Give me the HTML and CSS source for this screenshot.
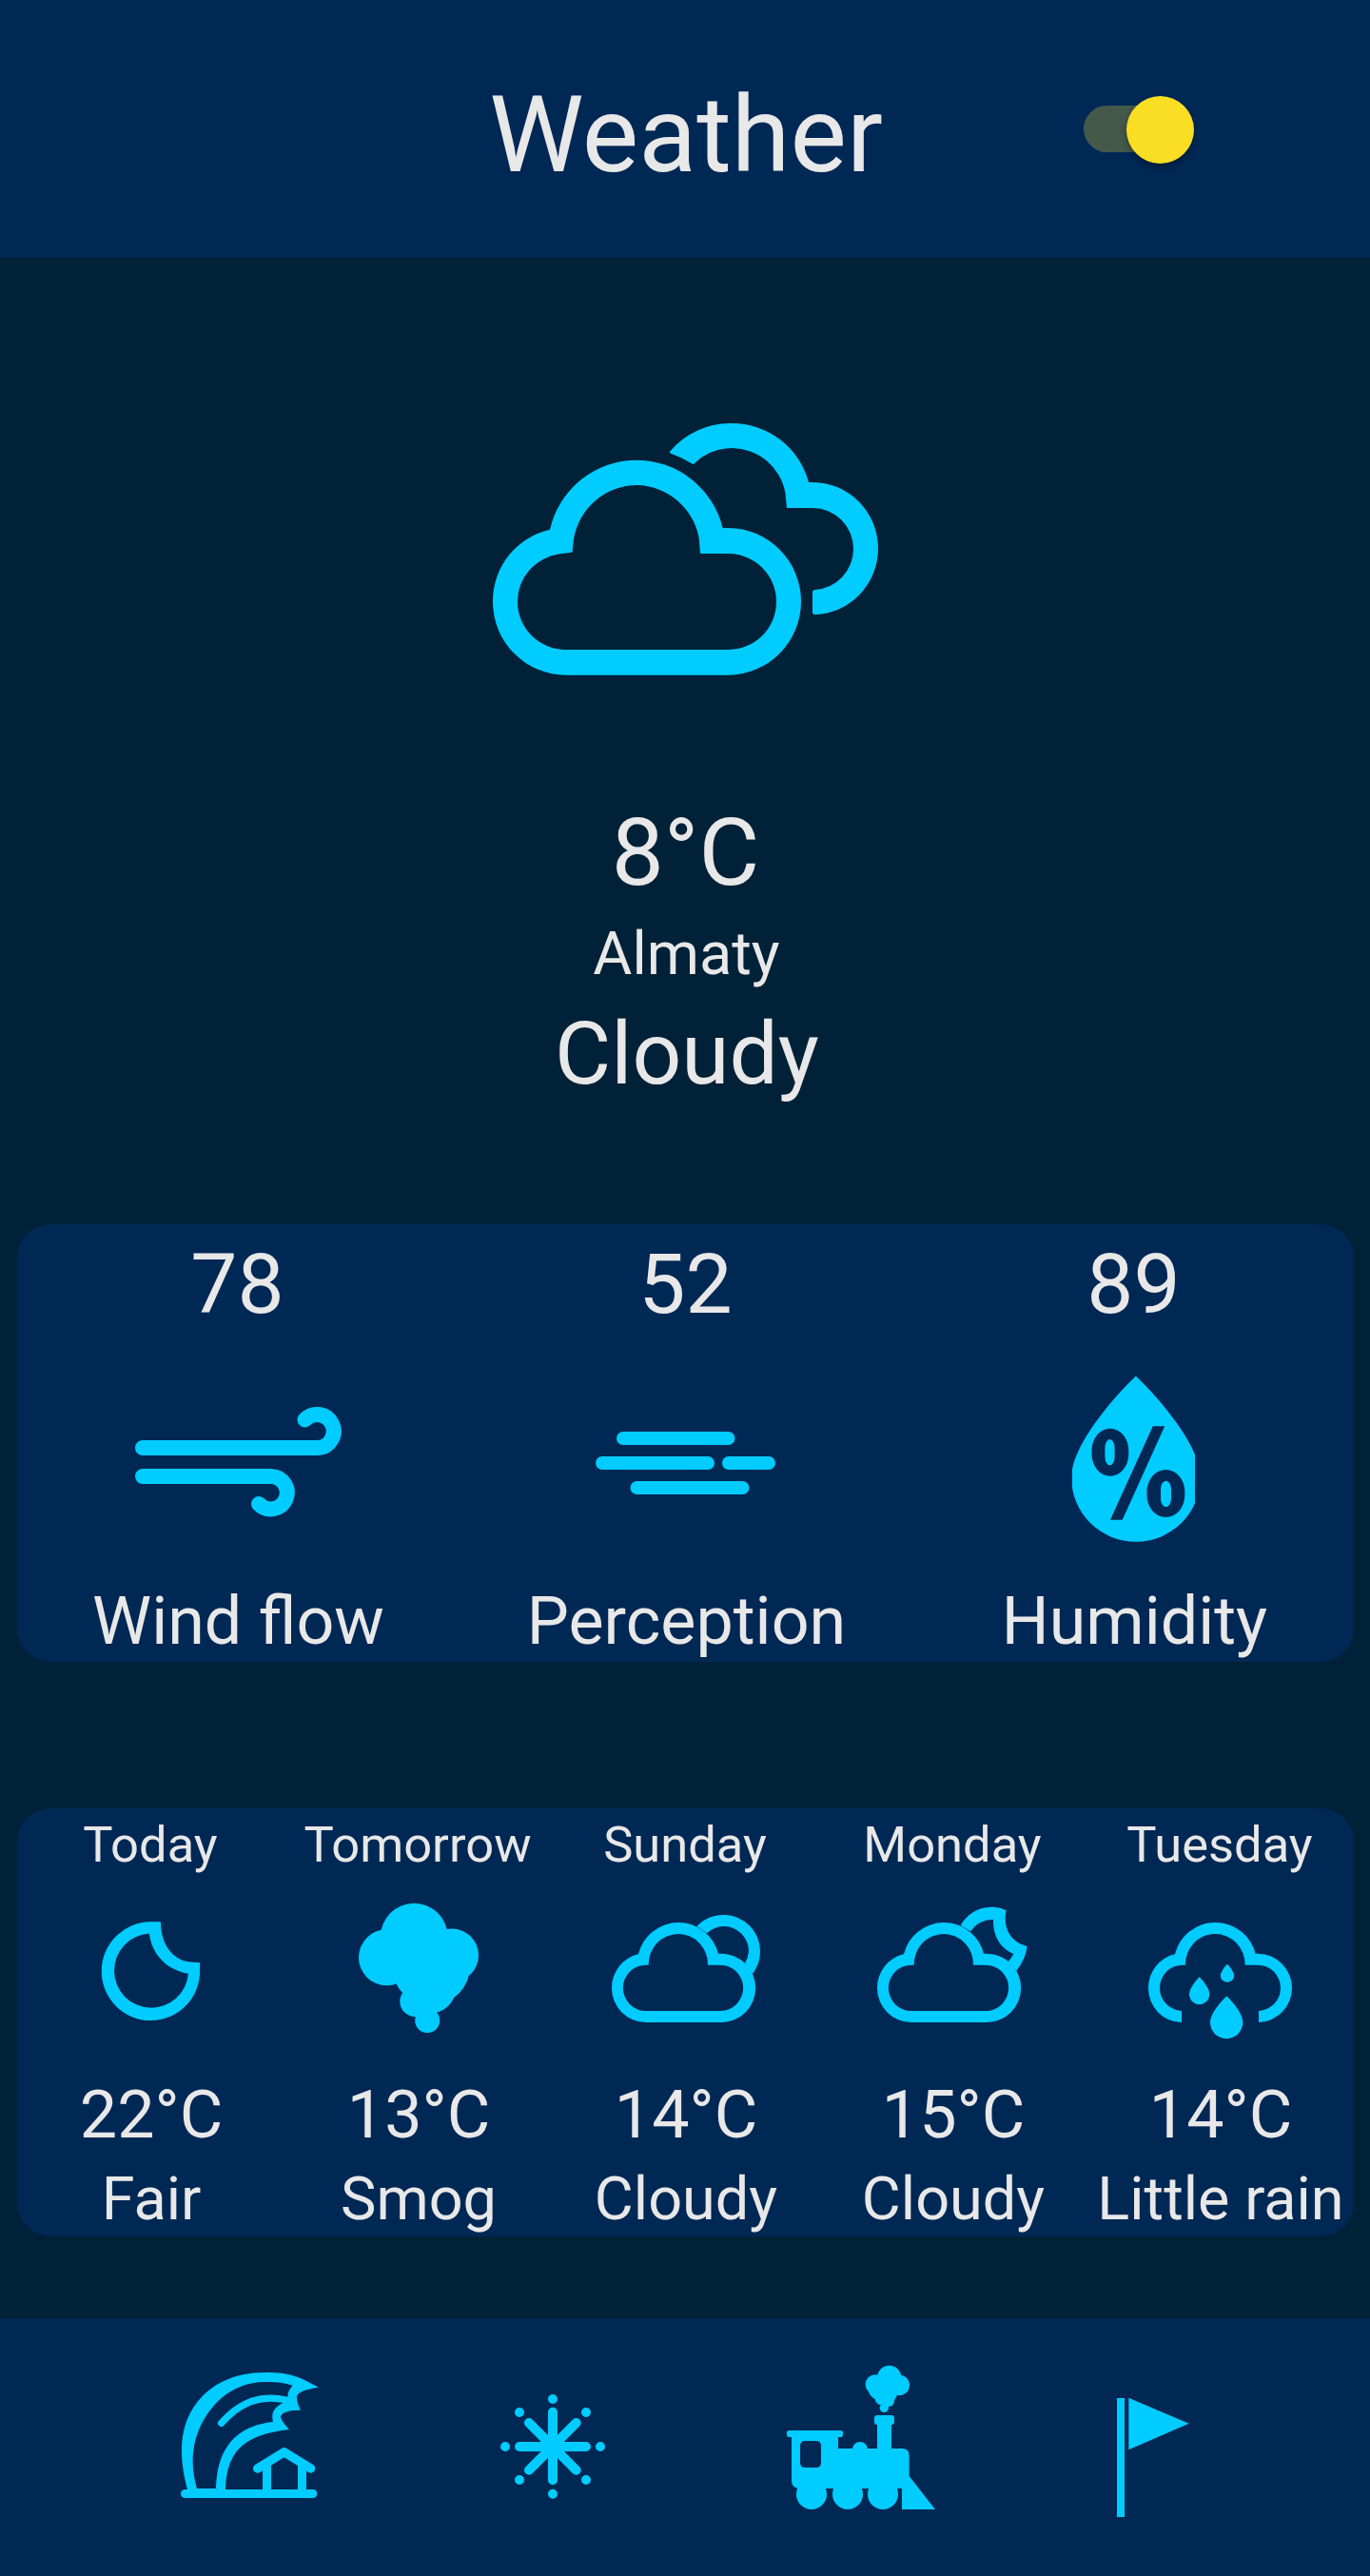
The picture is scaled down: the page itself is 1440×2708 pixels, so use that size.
FILE: index.html
```html
<!DOCTYPE html>
<html lang="en">
<head>
<meta charset="utf-8">
<title>Weather</title>
<link rel="stylesheet" href="styles.css">
</head>
<body>
<header class="top-bar">
  <h1 class="title">Weather</h1>
  <div class="switch" role="switch" aria-checked="true"><span class="thumb"></span></div>
</header>

<main class="content">
  <section class="current">
    <svg class="current-icon" viewBox="0 0 1320 930" aria-hidden="true">
      <path fill-rule="evenodd" d="M234 410A281 281 0 0 1 507 191A281 281 0 0 1 779 405H797A231 232 0 0 1 1026 637A231 232 0 0 1 797 869H285A231 231 0 0 1 54 638A231 231 0 0 1 234 410ZM305 479L309 440A203 203 0 0 1 508 270A203 203 0 0 1 704 437L708 483Q709 486 712 486H797A151.500 151.500 0 0 1 948 638A151.500 151.500 0 0 1 797 789H285A153 151 0 0 1 132 638A153 151 0 0 1 265 487L301 482.500Q304 482 305 479Z"/>
      <path d="M612 164A250 250 0 0 1 808 75A250 250 0 0 1 1050 261H1065A206 209 0 0 1 1269 470A206 209 0 0 1 1072 678Q1062 678 1062 671V607Q1062 601 1070 600A129 129 0 0 0 1191 471A129 129 0 0 0 1062 342H981L976 293A172 172 0 0 0 808 153A172 172 0 0 0 690 201Q686 206 681 202Q650 182 617 171Q610 168 612 164Z"/>
    </svg>
    <p class="current-temp">8°C</p>
    <p class="current-city">Almaty</p>
    <p class="current-sky">Cloudy</p>
  </section>

  <section class="card metrics">
    <div class="metric">
      <p class="metric-value">78</p>
      <svg class="metric-icon" viewBox="129 1413 240 248" aria-hidden="true">
        <g class="stroked" stroke-width="16">
          <path d="M150 1522H333.500a17.500 17.500 0 1 0-13-29.500"/>
          <path d="M150 1552H285a17.200 17.200 0 1 1-13 29"/>
        </g>
      </svg>
      <p class="metric-label">Wind flow</p>
    </div>
    <div class="metric">
      <p class="metric-value">52</p>
      <svg class="metric-icon" viewBox="600 1413 240 248" aria-hidden="true">
        <rect x="648" y="1505" width="124.500" height="14" rx="7"/>
        <rect x="626" y="1531" width="125" height="14" rx="7"/>
        <rect x="759" y="1531" width="56" height="14" rx="7"/>
        <rect x="662.500" y="1557" width="125" height="14" rx="7"/>
      </svg>
      <p class="metric-label">Perception</p>
    </div>
    <div class="metric">
      <p class="metric-value">89</p>
      <svg class="metric-icon drop-icon" viewBox="1126.500 1413 129 248" aria-hidden="true">
        <path d="M1193.400 1446.500C1215 1467 1261.200 1519 1261.200 1553A67.800 67.800 0 0 1 1125.600 1553C1125.600 1519 1171.800 1467 1193.400 1446.500Z"/>
        <g class="cutout">
          <rect x="1147" y="1501.700" width="38.800" height="50" rx="19.400" ry="23"/>
          <rect x="1205" y="1545" width="39.800" height="50" rx="19.900" ry="23"/>
          <path d="M1211.300 1499.300H1223.700L1179.200 1597.700H1166.500Z"/>
        </g>
        <rect x="1160.900" y="1513" width="10.200" height="27.500" rx="5.100" ry="9"/>
        <rect x="1219.500" y="1556.700" width="11" height="27.500" rx="5.500" ry="9"/>
      </svg>
      <p class="metric-label">Humidity</p>
    </div>
  </section>

  <section class="card forecast">
    <div class="day">
      <p class="day-name">Today</p>
      <svg class="day-icon" viewBox="58 1977 200 197" aria-hidden="true">
        <path fill-rule="evenodd" d="M158.500 2020.300H168Q169 2020.300 169 2021.500C169.500 2046 183 2062.300 203 2062.800L210.100 2063.300V2072A51.700 51.900 0 1 1 158.500 2020.300ZM156.900 2032.700A39 39 0 1 0 197.900 2074.700C175 2071 159.500 2054 156.900 2032.700Z"/>
      </svg>
      <p class="day-temp">22°C</p>
      <p class="day-sky">Fair</p>
    </div>
    <div class="day">
      <p class="day-name">Tomorrow</p>
      <svg class="day-icon" viewBox="339 1977 200 197" aria-hidden="true">
        <circle cx="435.300" cy="2036" r="35.300"/>
        <circle cx="406.500" cy="2057.800" r="29.500"/>
        <circle cx="475" cy="2055.500" r="28"/>
        <circle cx="453" cy="2067" r="41"/>
        <circle cx="452" cy="2089" r="27.500"/>
        <circle cx="436.300" cy="2104" r="16"/>
        <circle cx="449.200" cy="2124" r="13"/>
      </svg>
      <p class="day-temp">13°C</p>
      <p class="day-sky">Smog</p>
    </div>
    <div class="day">
      <p class="day-name">Sunday</p>
      <svg class="day-icon" viewBox="120 261 600 591" aria-hidden="true">
        <path id="cloud" fill-rule="evenodd" d="M273 493A130 130 0 0 1 399 393A130 130 0 0 1 525 491H534A108.500 108.500 0 0 1 534 708H297A108 108 0 0 1 189 600A108 108 0 0 1 273 493ZM305 527A94 96 0 0 1 399 429A94 96 0 0 1 492 527H531A72.500 72.500 0 0 1 531 672H297A72.500 72.500 0 0 1 297 527Z"/>
        <path d="M457 405A115 115 0 0 1 542 369A115 115 0 0 1 657 484A115 115 0 0 1 633 555L609 521A79 79 0 0 0 621 484A79 79 0 0 0 542 405A79 79 0 0 0 489 427Z"/>
      </svg>
      <p class="day-temp">14°C</p>
      <p class="day-sky">Cloudy</p>
    </div>
    <div class="day">
      <p class="day-name">Monday</p>
      <svg class="day-icon" viewBox="963 261 600 591" aria-hidden="true">
        <use href="#cloud" x="837"/>
        <path d="M1289 402A110 110 0 0 1 1433 355C1421 407 1445 455 1499 468Q1494 510 1465 545L1439 516Q1450 505 1456 492C1410 472 1391 432 1392 384A80 80 0 0 0 1321 421Z"/>
      </svg>
      <p class="day-temp">15°C</p>
      <p class="day-sky">Cloudy</p>
    </div>
    <div class="day">
      <p class="day-name">Tuesday</p>
      <svg class="day-icon" viewBox="306 261 600 591" aria-hidden="true">
        <path d="M486 708A105 108 0 0 1 381 600A108 108 0 0 1 465 493A130 130 0 0 1 591 393A130 130 0 0 1 719 491H726A108.500 108.500 0 0 1 834 600A108 108 0 0 1 729 708V672A72.500 72.500 0 0 0 798 600A72.500 72.500 0 0 0 726 527H686A94 96 0 0 0 591 429A94 96 0 0 0 498 527H489A72.500 72.500 0 0 0 417 600A72.500 72.500 0 0 0 486 672Z"/>
        <path d="M628 625C645 642 679 680 679 708A51.500 51.500 0 0 1 576 708C576 680 611 642 628 625Z"/>
        <path d="M542 565C553 576 574 602 574 619A32 32 0 0 1 510 619C510 602 531 576 542 565Z"/>
        <path d="M630 524C637 531 651.500 549 651.500 560A21.500 21.500 0 0 1 608.500 560C608.500 549 623 531 630 524Z"/>
      </svg>
      <p class="day-temp">14°C</p>
      <p class="day-sky">Little rain</p>
    </div>
  </section>
</main>

<nav class="bottom-bar">
  <svg class="nav-icon" viewBox="0 0 570 540" aria-label="Tsunami">
    <path fill-rule="evenodd" d="M82 445C45 310 62 215 130 145C185 90 255 72 330 72C400 72 432 84 494 119C440 128 425 137 426 155C427 167 433 180 438 191C395 190 376 200 375 213C378 225 390 238 402 252C270 268 203 310 201 445H171C172 310 235 240 351 228C345 203 350 185 381 169L397 150C398 135 402 125 413 113C385 104 355 101 325 102C265 103 215 125 175 165C105 238 80 335 111 438H172V446Z"/>
    <g class="stroked">
      <path stroke-width="22" d="M188 232C250 162 315 142 393 159"/>
      <path stroke-width="27" d="M73.500 454.500H476.500"/>
      <path stroke-width="27" d="M331.500 454V368M442.500 454V368"/>
      <path stroke-width="28" d="M302 375L386 323L470 375"/>
    </g>
  </svg>
  <svg class="nav-icon" viewBox="-30 -60 570 540" aria-label="Snow">
    <g class="stroked" stroke-width="30">
      <path d="M243 137V352M138 246H348M168 171L317 320M317 171L168 320"/>
      <path d="M243 96h.01M243 395h.01M93 246h.01M393 246h.01M138 138h.01M348 138h.01M138 351h.01M348 351h.01"/>
    </g>
  </svg>
  <svg class="nav-icon" viewBox="0 0 570 540" aria-label="Train">
    <circle cx="374" cy="88" r="38"/>
    <circle cx="330" cy="110" r="31"/>
    <circle cx="406" cy="112" r="32"/>
    <circle cx="344" cy="123" r="36"/>
    <circle cx="366" cy="134" r="34"/>
    <circle cx="350" cy="154" r="21"/>
    <circle cx="373" cy="163" r="17"/>
    <circle cx="358" cy="184" r="14"/>
    <rect x="327" y="207" width="63" height="30" rx="9"/>
    <rect x="336" y="225" width="45" height="95"/>
    <rect x="51" y="255" width="177" height="21" rx="7"/>
    <circle cx="282" cy="315" r="24"/>
    <path fill-rule="evenodd" d="M66 265H213V312H415Q437 312 437 334V399L519 504H414V438H87Q66 434 66 415ZM109 288Q93 288 93 304V356Q93 372 109 372H143Q159 372 159 356V304Q159 288 143 288Z"/>
    <circle cx="129" cy="456" r="48"/>
    <circle cx="243" cy="456" r="48"/>
    <circle cx="354" cy="456" r="48"/>
  </svg>
  <svg class="nav-icon" viewBox="0 150 570 540" aria-label="Flag">
    <rect x="132" y="303" width="24" height="375"/>
    <path d="M169 302L359 383.500L169 465.500Z"/>
  </svg>
</nav>
</body>
</html>
```
FILE: styles.css
```css
* {
  box-sizing: border-box;
}

body {
  margin: 0;
  width: 1440px;
  height: 2708px;
  display: flex;
  flex-direction: column;
  background: #002137;
  color: #e8e8e8;
  font-family: Roboto, "Liberation Sans", sans-serif;
  font-weight: 400;
  overflow: hidden;
}

h1,
p {
  margin: 0;
  font-weight: 400;
  text-align: center;
  white-space: nowrap;
}

svg {
  display: block;
  flex: none;
  fill: #00ccff;
}

.stroked {
  fill: none;
  stroke: #00ccff;
  stroke-linecap: round;
  stroke-linejoin: round;
}

.cutout {
  fill: #002855;
}

.top-bar {
  flex: none;
  height: 271px;
  display: grid;
  grid-template-columns: 1fr 440px 1fr;
  align-items: start;
  background: #002855;
}

.title {
  grid-column: 2;
  margin-top: 78px;
  padding-left: 2px;
  font-size: 112px;
  line-height: 128px;
}

.switch {
  width: 116px;
  height: 49px;
  margin: 111px 0 0 199px;
  display: flex;
  align-items: center;
  justify-content: flex-end;
  border-radius: 25px;
  background: linear-gradient(90deg, #45594b 85px, transparent 85px);
}

.thumb {
  flex: none;
  width: 71px;
  height: 71px;
  margin-top: 2px;
  border-radius: 50%;
  background: #f9de24;
  box-shadow: 0 4px 7px rgba(0, 0, 0, 0.32);
}

.content {
  flex: 1;
  display: flex;
  flex-direction: column;
}

.current {
  height: 1016px;
  padding-top: 149px;
  display: flex;
  flex-direction: column;
  align-items: center;
}

.current-icon {
  width: 440px;
  height: 310px;
  margin-bottom: 109px;
}

.current-temp {
  padding-left: 1px;
  font-size: 98px;
  line-height: 116px;
}

.current-city {
  padding-left: 3px;
  font-size: 63px;
  line-height: 96px;
}

.current-sky {
  padding-left: 4px;
  font-size: 91px;
  line-height: 115px;
}

.card {
  margin: 0 17.5px;
  display: grid;
  justify-content: center;
  border-radius: 35px;
  background: #002855;
}

.metrics {
  height: 460px;
  grid-template-columns: repeat(3, 471px);
}

.metric,
.day {
  display: flex;
  flex-direction: column;
  align-items: center;
}

.metric-value {
  padding-left: 1px;
  font-size: 87.5px;
  line-height: 126px;
}

.metric-icon {
  width: 240px;
  height: 248px;
}

.drop-icon {
  width: 129px;
}

.metric-label {
  padding-left: 3px;
  font-size: 70px;
  line-height: 86px;
}

.forecast {
  height: 450px;
  margin-top: 154px;
  grid-template-columns: repeat(5, 281px);
}

.day-name {
  font-size: 52.5px;
  line-height: 76px;
}

.day-icon {
  width: 200px;
  height: 197px;
}

.day-temp {
  padding-left: 2px;
  font-size: 70px;
  line-height: 98px;
}

.day-sky {
  padding-left: 2px;
  font-size: 63px;
  line-height: 79px;
}

.bottom-bar {
  flex: none;
  height: 271px;
  padding: 33px 0 0 105px;
  display: grid;
  grid-template-columns: repeat(4, 320px);
  justify-items: center;
  background: #002855;
}

.nav-icon {
  width: 190px;
  height: 180px;
}
```
